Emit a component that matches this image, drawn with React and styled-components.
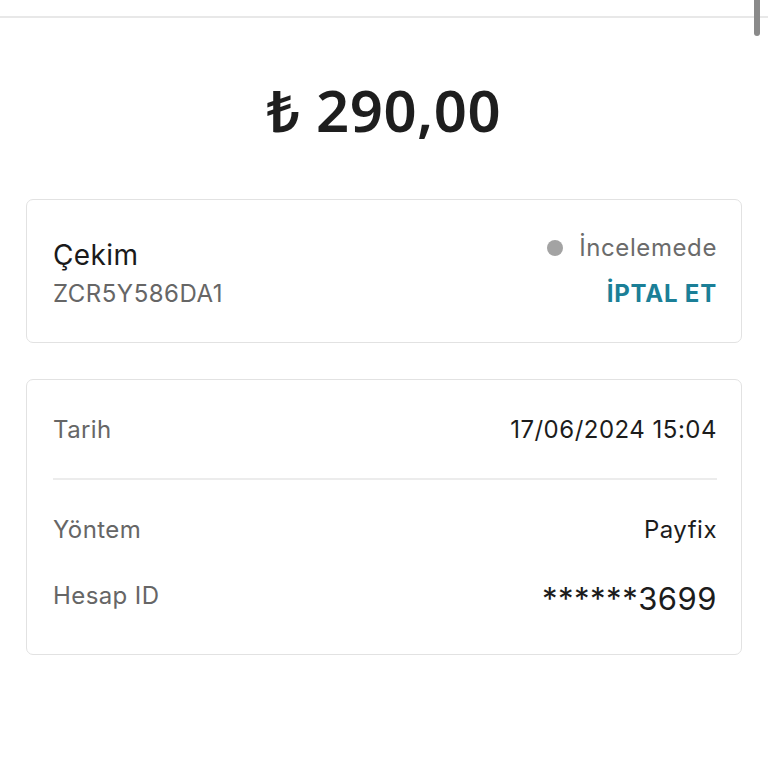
import React from "react";
import styled, { createGlobalStyle } from "styled-components";

const Global = createGlobalStyle`
  html, body { margin: 0; padding: 0; background: #ffffff; }
  body { font-family: Inter, "Noto Sans", "Liberation Sans", sans-serif; color: #1c1c1c; }
  * { box-sizing: border-box; }
`;

const Page = styled.div`
  position: relative;
  width: 768px;
  min-height: 768px;
  background: #fff;
`;

const TopBar = styled.div`
  height: 18px;
  border-bottom: 2px solid #e8e8e8;
`;

const ScrollThumb = styled.div`
  position: absolute;
  top: 0;
  right: 8px;
  width: 6px;
  height: 36px;
  border-radius: 0 0 3px 3px;
  background: #8a8a8a;
`;

const Amount = styled.div`
  margin-top: 57px;
  height: 70px;
  line-height: 70px;
  text-align: center;
  font-family: "Noto Sans", "Open Sans", sans-serif;
  font-weight: 600;
  font-size: 58px;
  color: #1e1e1e;
  letter-spacing: 0.5px;
`;

const Content = styled.div`
  padding: 54px 26px 0 26px;
  display: flex;
  flex-direction: column;
  gap: 36px;
`;

const Card = styled.div`
  border: 1px solid #e2e2e2;
  border-radius: 7px;
  background: #fff;
  padding: ${(p) => p.$pad};
`;

const SummaryRow = styled.div`
  display: flex;
  justify-content: space-between;
  align-items: flex-start;
`;

const Col = styled.div`
  display: flex;
  flex-direction: column;
  align-items: ${(p) => (p.$right ? "flex-end" : "flex-start")};
  gap: ${(p) => p.$gap || "8px"};
  margin-top: ${(p) => p.$mt || "0"};
`;

const Title = styled.div`
  font-size: 28px;
  line-height: 32px;
  color: #1a1a1a;
  letter-spacing: 0.4px;
`;

const Code = styled.div`
  font-size: 24px;
  line-height: 30px;
  color: #666;
  letter-spacing: 0.5px;
`;

const Status = styled.div`
  display: flex;
  align-items: center;
  gap: 16px;
  font-size: 24px;
  line-height: 30px;
  color: #6b6b6b;
  letter-spacing: 0.6px;
`;

const Dot = styled.span`
  width: 16px;
  height: 16px;
  border-radius: 50%;
  background: #a3a3a3;
`;

const Cancel = styled.button`
  border: none;
  background: none;
  padding: 0;
  font-family: inherit;
  font-weight: 700;
  font-size: 24px;
  line-height: 30px;
  letter-spacing: 0.8px;
  color: #1b7f97;
  cursor: pointer;
`;

const InfoRow = styled.div`
  display: flex;
  justify-content: space-between;
  align-items: center;
  height: 50px;
  margin-top: ${(p) => p.$mt || "0"};
`;

const Label = styled.span`
  font-size: 24px;
  color: #666;
  letter-spacing: 0.4px;
`;

const Value = styled.span`
  font-size: ${(p) => p.$size || "24px"};
  color: #1c1c1c;
  letter-spacing: 0.5px;
  padding-top: ${(p) => p.$drop || "0"};
`;

const Divider = styled.div`
  height: 2px;
  background: #ececec;
  margin: 24px 0;
`;

export default function App() {
  return (
    <Page>
      <Global />
      <TopBar />
      <ScrollThumb />
      <Amount>₺ 290,00</Amount>
      <Content>
        <Card $pad="33px 24px 33px 26px">
          <SummaryRow>
            <Col $mt="6px" $gap="8px">
              <Title>Çekim</Title>
              <Code>ZCR5Y586DA1</Code>
            </Col>
            <Col $right $gap="16px">
              <Status>
                <Dot />
                İncelemede
              </Status>
              <Cancel>İPTAL ET</Cancel>
            </Col>
          </SummaryRow>
        </Card>
        <Card $pad="24px 24px 34px 26px">
          <InfoRow>
            <Label>Tarih</Label>
            <Value>17/06/2024 15:04</Value>
          </InfoRow>
          <Divider />
          <InfoRow>
            <Label>Yöntem</Label>
            <Value>Payfix</Value>
          </InfoRow>
          <InfoRow $mt="16px">
            <Label>Hesap ID</Label>
            <Value $size="31px" $drop="6px">******3699</Value>
          </InfoRow>
        </Card>
      </Content>
    </Page>
  );
}
